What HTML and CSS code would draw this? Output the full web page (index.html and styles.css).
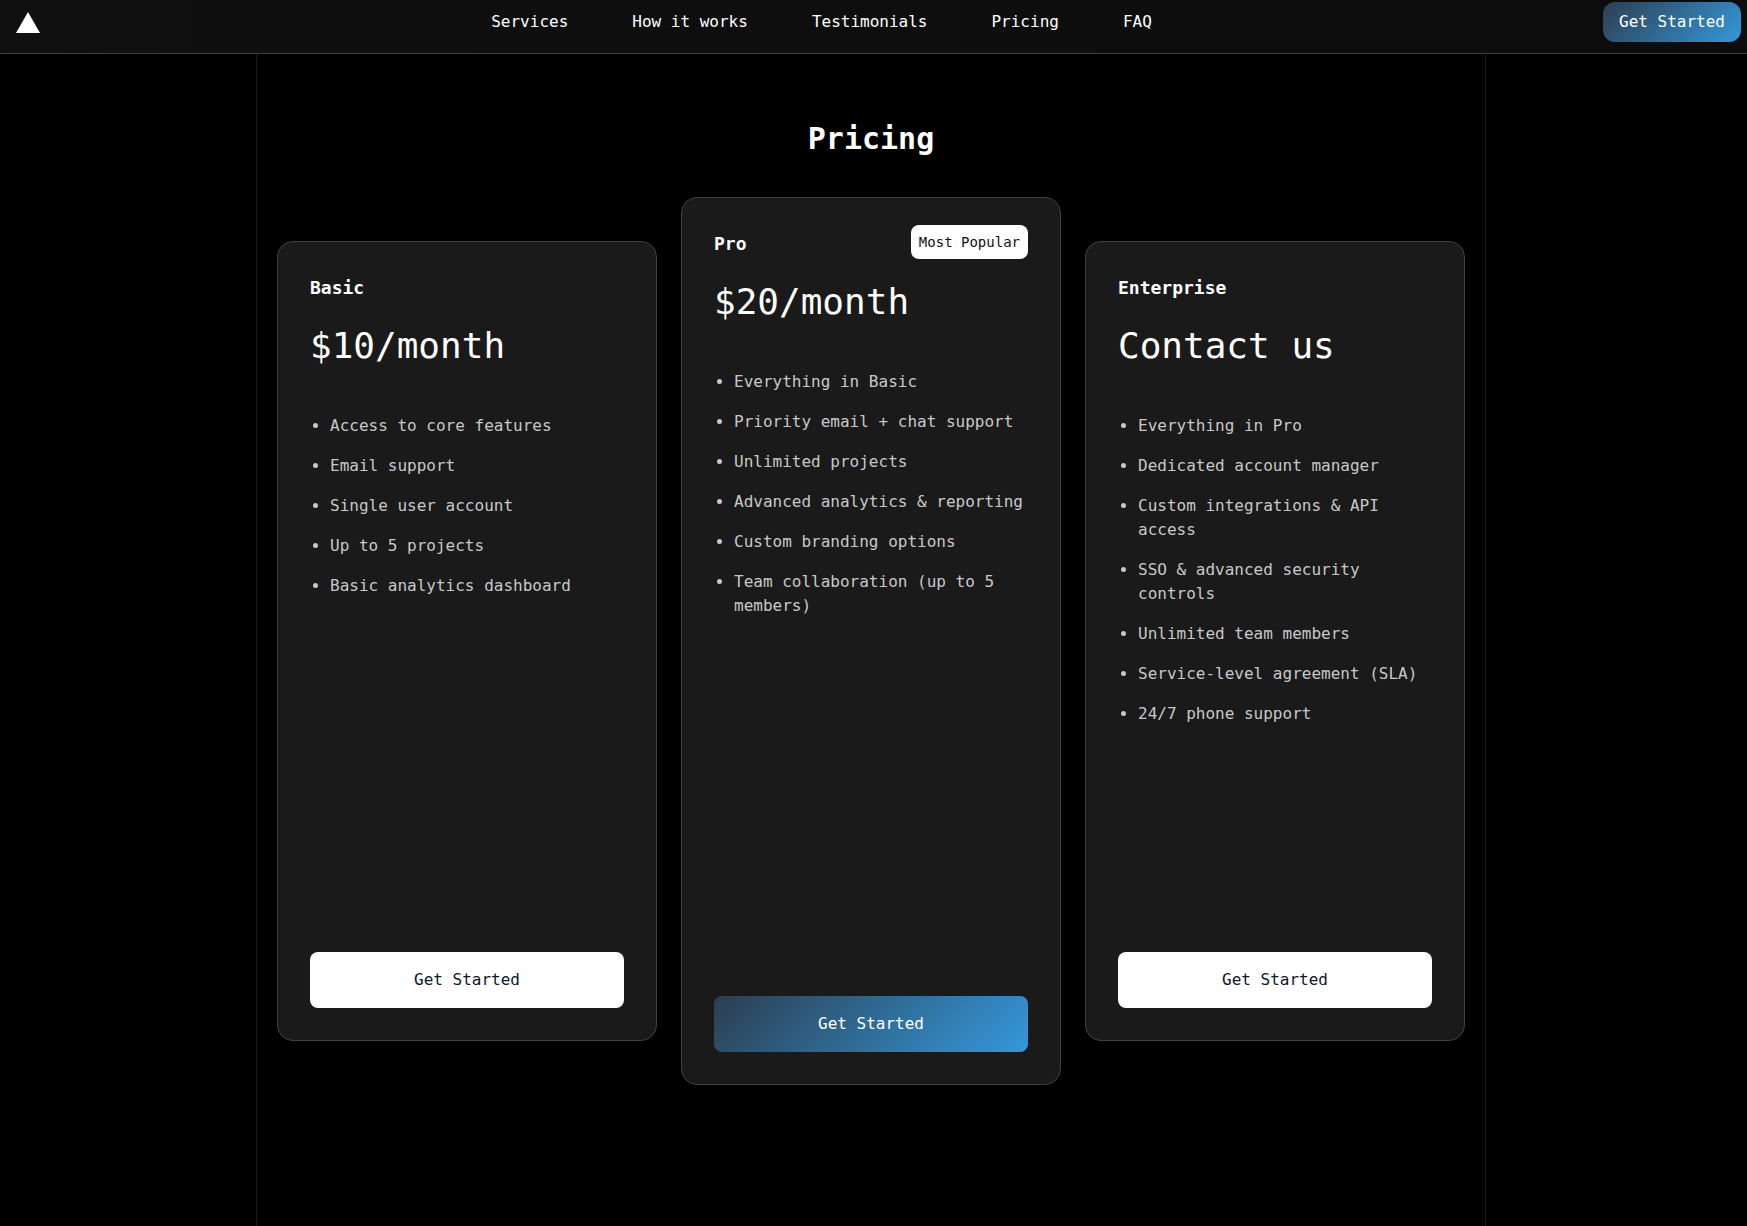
FILE: index.html
```html
<!DOCTYPE html>
<html lang="en">
<head>
  <meta charset="utf-8">
  <meta name="viewport" content="width=device-width, initial-scale=1">
  <title>Pricing</title>
  <link rel="stylesheet" href="styles.css">
</head>
<body>
  <header class="site-header">
    <a class="logo" href="#" aria-label="Home">
      <svg width="24" height="21" viewBox="0 0 24 21" aria-hidden="true"><path d="M12 0 24 21H0Z" fill="#fff"/></svg>
    </a>
    <nav class="nav" aria-label="Main">
      <a href="#services">Services</a>
      <a href="#how">How it works</a>
      <a href="#testimonials">Testimonials</a>
      <a href="#pricing">Pricing</a>
      <a href="#faq">FAQ</a>
    </nav>
    <button class="button button-accent button-small" type="button">Get Started</button>
  </header>

  <main class="page">
    <section class="pricing" id="pricing">
      <h1 class="title">Pricing</h1>
      <div class="plans">
        <article class="plan">
          <h2 class="plan-name">Basic</h2>
          <p class="plan-price">$10/month</p>
          <ul class="features">
            <li>Access to core features</li>
            <li>Email support</li>
            <li>Single user account</li>
            <li>Up to 5 projects</li>
            <li>Basic analytics dashboard</li>
          </ul>
          <button class="button button-light" type="button">Get Started</button>
        </article>
        <article class="plan plan-featured">
          <span class="badge">Most Popular</span>
          <h2 class="plan-name">Pro</h2>
          <p class="plan-price">$20/month</p>
          <ul class="features">
            <li>Everything in Basic</li>
            <li>Priority email + chat support</li>
            <li>Unlimited projects</li>
            <li>Advanced analytics &amp; reporting</li>
            <li>Custom branding options</li>
            <li>Team collaboration (up to 5 members)</li>
          </ul>
          <button class="button button-accent" type="button">Get Started</button>
        </article>
        <article class="plan">
          <h2 class="plan-name">Enterprise</h2>
          <p class="plan-price">Contact us</p>
          <ul class="features">
            <li>Everything in Pro</li>
            <li>Dedicated account manager</li>
            <li>Custom integrations &amp; API access</li>
            <li>SSO &amp; advanced security controls</li>
            <li>Unlimited team members</li>
            <li>Service-level agreement (SLA)</li>
            <li>24/7 phone support</li>
          </ul>
          <button class="button button-light" type="button">Get Started</button>
        </article>
      </div>
    </section>
  </main>
</body>
</html>
```
FILE: styles.css
```css
* {
  box-sizing: border-box;
  margin: 0;
}

body {
  display: flex;
  flex-direction: column;
  min-height: 100vh;
  background: #000;
  color: #fff;
  font: 16px/24px "DejaVu Sans Mono", "Liberation Mono", monospace;
}

.site-header {
  display: flex;
  justify-content: space-between;
  align-items: center;
  padding: 2px 6px 11px 0;
  background: linear-gradient(90deg, #101010, #0c0c0c);
  border-bottom: 1px solid #404040;
}

.logo {
  display: flex;
  padding-left: 16px;
}

.nav {
  display: flex;
  flex-wrap: wrap;
  gap: 8px 64px;
}

.nav a {
  color: inherit;
  text-decoration: none;
}

.button {
  height: 56px;
  padding: 0 16px;
  border: 0;
  border-radius: 8px;
  font: inherit;
  cursor: pointer;
}

.button-small {
  height: 40px;
  border-radius: 12px;
}

.button-light {
  background: #fff;
  color: #0f172a;
}

.button-accent {
  background: linear-gradient(135deg, #2c3e50, #3498db);
  color: #fff;
}

.page {
  display: flex;
  flex: 1;
  justify-content: center;
  padding-right: 5px;
}

.pricing {
  flex: 1;
  max-width: 1230px;
  padding: 67px 20px;
  border: solid #1a1a1a;
  border-width: 0 1px;
}

.title {
  margin-bottom: 40px;
  font-size: 30px;
  line-height: 36px;
  text-align: center;
}

.plans {
  display: grid;
  grid-template-columns: repeat(auto-fit, minmax(340px, 1fr));
  align-items: center;
  gap: 24px;
}

.plan {
  position: relative;
  display: flex;
  flex-direction: column;
  min-height: 800px;
  padding: 32px;
  background: #1a1a1a;
  border: 1px solid #404040;
  border-radius: 16px;
}

.plan-featured {
  min-height: 888px;
}

.plan-name {
  margin-bottom: 24px;
  font-size: 18px;
  line-height: 28px;
}

.plan-price {
  margin-bottom: 48px;
  font-size: 36px;
  line-height: 40px;
}

.features {
  display: flex;
  flex: 1;
  flex-direction: column;
  gap: 16px;
  padding-left: 20px;
  color: #c8c8c8;
}

.badge {
  position: absolute;
  top: 27px;
  right: 32px;
  padding: 7px 8px;
  background: #fff;
  border-radius: 8px;
  color: #111;
  font-size: 14px;
  line-height: 20px;
}
```
